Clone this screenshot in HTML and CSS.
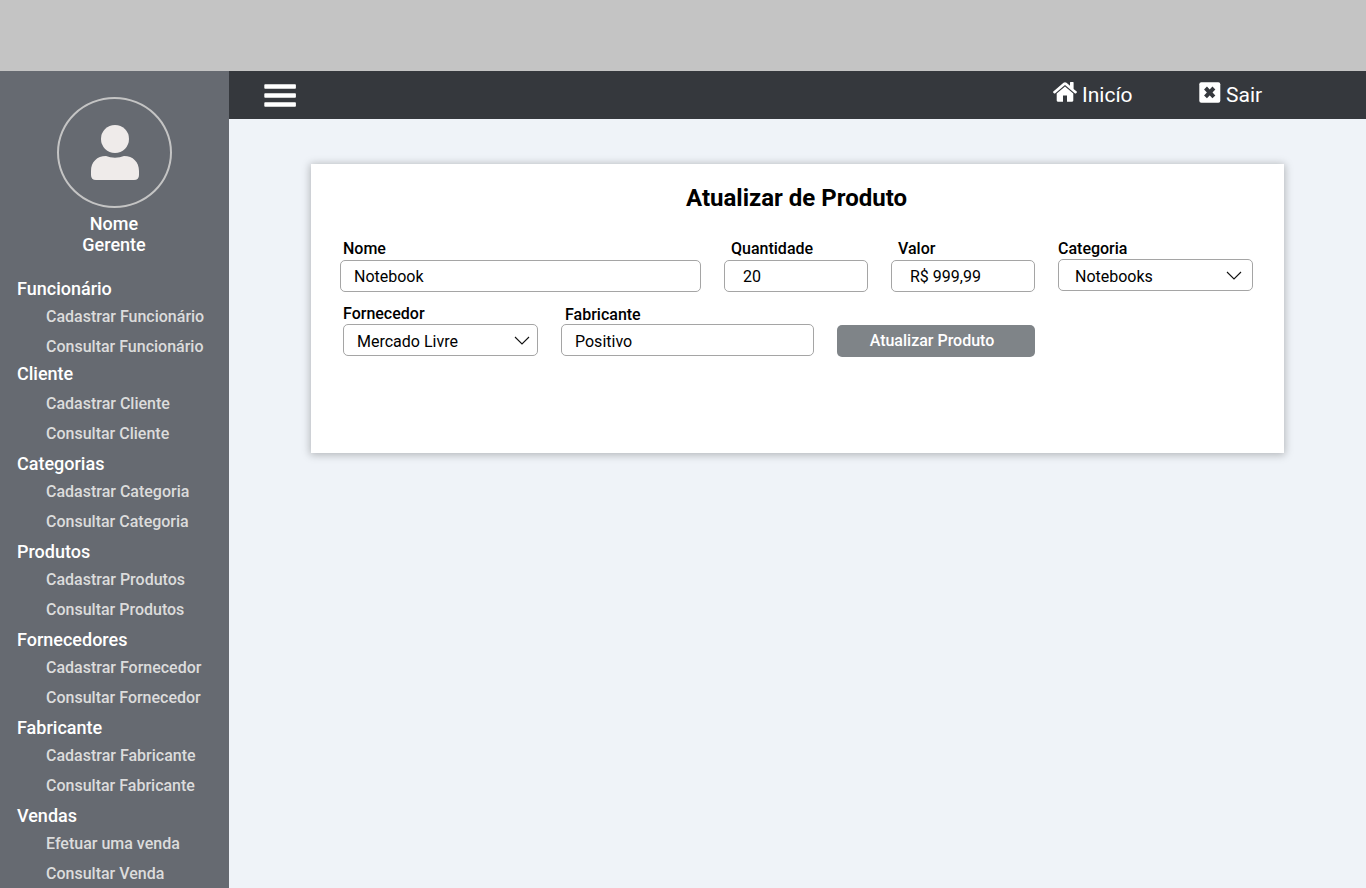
FILE: index.html
```html
<!DOCTYPE html>
<html lang="pt-BR">
<head>
<meta charset="utf-8">
<title>Atualizar Produto</title>
<link rel="stylesheet" href="styles.css">
</head>
<body>
<div class="banner"></div>
<div class="layout">
  <aside class="sidebar">
    <div class="avatar">
      <svg width="48" height="56" viewBox="0 0 48 56" fill="#efebea"><circle cx="24" cy="14" r="14"/><path d="M0 50V46C0 37 6 31 15 31Q19 32.700 24 32.700Q29 32.700 33 31C42 31 48 37 48 46V50Q48 55 43 55H5Q0 55 0 50Z"/></svg>
    </div>
    <div class="user">Nome<br>Gerente</div>
    <nav class="menu">
      <section class="group"><h2>Funcionário</h2><a>Cadastrar Funcionário</a><a>Consultar Funcionário</a></section>
      <section class="group group-spaced"><h2>Cliente</h2><a>Cadastrar Cliente</a><a>Consultar Cliente</a></section>
      <section class="group"><h2>Categorias</h2><a>Cadastrar Categoria</a><a>Consultar Categoria</a></section>
      <section class="group"><h2>Produtos</h2><a>Cadastrar Produtos</a><a>Consultar Produtos</a></section>
      <section class="group"><h2>Fornecedores</h2><a>Cadastrar Fornecedor</a><a>Consultar Fornecedor</a></section>
      <section class="group"><h2>Fabricante</h2><a>Cadastrar Fabricante</a><a>Consultar Fabricante</a></section>
      <section class="group"><h2>Vendas</h2><a>Efetuar uma venda</a><a>Consultar Venda</a></section>
    </nav>
  </aside>
  <main class="content">
    <header class="topbar">
      <svg class="burger" width="32" height="24" viewBox="0 0 32 24" fill="#fff"><rect x=".3" y=".3" width="31.600" height="4.400" rx=".8"/><rect x=".3" y="9.300" width="31.600" height="4.400" rx=".8"/><rect x=".3" y="18.300" width="31.600" height="4.400" rx=".8"/></svg>
      <a class="link home">
        <svg width="24" height="20" viewBox="0 0 24 20" fill="#fff"><path d="M12 4.500L20.300 11.400V18.600Q20.300 19.700 19.200 19.700H14V13.500H10V19.700H4.800Q3.700 19.700 3.700 18.600V11.400Z"/><path d="M.3 9.500L10.500.8Q12 -.4 13.500.8L17 3.800V.6Q17 0 17.600 0H20Q20.600 0 20.600.6V6.900L23.700 9.500Q24.200 9.900 23.800 10.400L22.900 11.400Q22.500 11.800 22 11.400L12 2.900L2 11.400Q1.500 11.800 1.100 11.400L.2 10.400Q-.2 9.900.3 9.500Z"/></svg>
        <span>Inicío</span>
      </a>
      <a class="link exit">
        <svg width="22" height="21" viewBox="0 0 22 21"><rect x=".3" y=".2" width="21" height="20.600" rx="2" fill="#fff"/><path d="M6.500 6L14.900 14.800M14.900 6L6.500 14.800" fill="none" stroke="#35383d" stroke-width="4"/></svg>
        <span>Sair</span>
      </a>
    </header>
    <form class="card">
      <h1>Atualizar de Produto</h1>
      <div class="row row-first">
        <div class="field name"><label>Nome</label><div class="box">Notebook</div></div>
        <div class="field quantity"><label>Quantidade</label><div class="box">20</div></div>
        <div class="field price"><label>Valor</label><div class="box">R$ 999,99</div></div>
        <div class="field category"><label>Categoria</label><div class="box">Notebooks<svg class="chevron" width="16" height="9" viewBox="0 0 16 9"><path d="M1 1L8 8L15 1"/></svg></div></div>
      </div>
      <div class="row row-second">
        <div class="field supplier"><label>Fornecedor</label><div class="box">Mercado Livre<svg class="chevron" width="16" height="9" viewBox="0 0 16 9"><path d="M1 1L8 8L15 1"/></svg></div></div>
        <div class="field maker"><label>Fabricante</label><div class="box">Positivo</div></div>
        <button type="button">Atualizar Produto</button>
      </div>
    </form>
  </main>
</div>
</body>
</html>
```
FILE: styles.css
```css
* { box-sizing: border-box; }
body { margin: 0; height: 888px; overflow: hidden; background: #eff3f8; font-family: Roboto, sans-serif; color: #000; }
.banner { height: 71px; background: #c4c4c4; }
.layout { display: flex; height: 817px; }
.sidebar { width: 229px; overflow: hidden; background: #666a71; color: #fff; }
.avatar { display: flex; justify-content: center; width: 115px; height: 111px; margin: 26px 0 0 57px; padding: 26px 0 0 1px; border: 2px solid #c4c4c4; border-radius: 50%; }
.user { width: 228px; margin-top: 5px; font-size: 18px; font-weight: 500; line-height: 21px; text-align: center; }
.menu { padding: 21px 0 0 17px; }
.group { display: flex; flex-direction: column; margin-bottom: 2px; }
.group:first-child { margin-bottom: -1px; }
.group h2 { margin: 0 0 1px; font-size: 18px; font-weight: 500; line-height: 25px; }
.group-spaced h2 { margin-bottom: 3px; }
.group a { padding-left: 29px; font-size: 16px; font-weight: 500; line-height: 30px; color: #dcdcdc; white-space: nowrap; }
.content { flex: 1; }
.topbar { display: flex; height: 48px; padding-left: 35px; background: #35383d; color: #fff; }
.burger { margin-top: 13px; }
.link { display: flex; align-items: flex-start; gap: 5px; font-size: 21px; line-height: 24px; }
.link svg { margin-top: 11px; flex: none; }
.link span { margin-top: 12px; }
.home { width: 146px; margin-left: 757px; }
.card { width: 973px; height: 289px; margin: 45px 0 0 82px; padding: 20px 29px 0; background: #fff; box-shadow: 0 1px 8px 1px rgba(0, 0, 0, .25); }
.card h1 { margin: 0 0 0 -2px; font-size: 24px; font-weight: 700; line-height: 28px; text-align: center; }
.row { display: flex; align-items: flex-start; gap: 23px; }
.row-first { margin-top: 28px; }
.row-second { margin: 13px 0 0 3px; }
.field label { display: block; height: 20px; font-size: 16px; font-weight: 500; line-height: 18px; }
.box { display: flex; align-items: center; justify-content: space-between; height: 32px; padding: 1px 10px 0 13px; border: 1px solid #a5a5a5; border-radius: 5px; font-size: 16px; }
.chevron { margin-top: -3px; fill: none; stroke: #111; stroke-width: 1.100; }
.name { width: 361px; }
.name label { padding-left: 3px; }
.quantity, .price { width: 144px; }
.quantity label, .price label { padding-left: 7px; }
.quantity .box, .price .box { padding-left: 18px; }
.category { width: 195px; }
.category label { height: 19px; }
.category .box { padding: 3px 10px 0 16px; }
.supplier { width: 195px; }
.supplier .box { padding: 3px 7px 0 13px; }
.maker { width: 253px; }
.maker .box { padding-top: 3px; }
.supplier label, .maker label { height: 19px; }
.maker label { padding: 1px 0 0 4px; }
button { width: 198px; height: 32px; margin-top: 20px; padding: 0 8px 2px 0; border: 0; border-radius: 5px; background: #7f8488; color: #fff; font: 500 16px Roboto, sans-serif; }
```
